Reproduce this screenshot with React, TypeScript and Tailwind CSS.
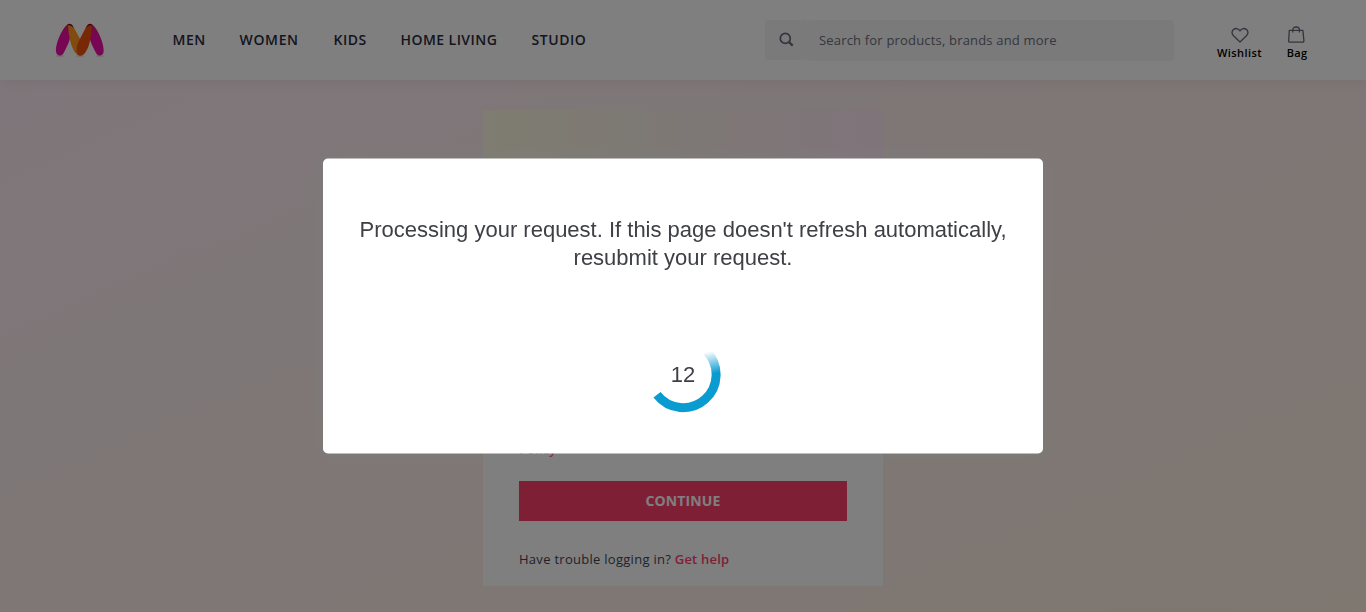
import React from "react";

const navItems = [
  { label: "MEN", cls: "w-[67px] tracking-[0.5px]" },
  { label: "WOMEN", cls: "w-[94px] tracking-[0.66px]" },
  { label: "KIDS", cls: "w-[67px] tracking-[0.5px]" },
  { label: "HOME LIVING", cls: "w-[131px] tracking-[0.44px]" },
  { label: "STUDIO", cls: "w-[56px] tracking-[0.56px]" },
];

function Logo() {
  return (
    <svg width="52" height="36" viewBox="42 36 156 108" className="shrink-0">
      <defs>
        <linearGradient id="legLeft" x1="0" y1="0" x2="0" y2="1">
          <stop offset="0" stopColor="#d81c60" />
          <stop offset="0.3" stopColor="#ee0fa6" />
        </linearGradient>
      </defs>
      <ellipse cx="60" cy="138" rx="12" ry="4" fill="#e6e6e6" />
      <ellipse cx="120" cy="138" rx="12" ry="4" fill="#e6e6e6" />
      <ellipse cx="180" cy="138" rx="12" ry="4" fill="#e6e6e6" />
      <path d="M86 42C69 48 46 100 48 124C49 140 66 140 71 129C79 113 88 97 91 80L92 52Z" fill="url(#legLeft)" />
      <path d="M153 42C170 48 193 100 191 124C190 140 173 140 168 129C160 113 151 97 148 80L147 52Z" fill="url(#legLeft)" />
      <path d="M84 44C92 38 99 48 105 59L120 86L124 136C112 139 103 128 97 112C90 95 85 66 84 44Z" fill="#ff961f" />
      <path d="M155 44C147 38 140 48 134 59L117 92C108 108 106 137 120 137C133 137 140 122 145 110C151 93 155 66 155 44Z" fill="#f0500a" />
      <path d="M80 46C86 39 93 40 98 47L102 54C96 48 87 44 80 46ZM159 46C153 39 146 40 141 47L137 54C143 48 152 44 159 46Z" fill="#8e0f20" />
    </svg>
  );
}

function SearchIcon() {
  return (
    <svg width="16" height="16" viewBox="0 0 16 16" fill="none" stroke="#696b79" strokeWidth="1.700">
      <circle cx="7.300" cy="6.400" r="5" />
      <path d="M10.800 9.900L14.700 13.600" strokeWidth="2.200" />
    </svg>
  );
}

function HeartIcon() {
  return (
    <svg width="18" height="16" viewBox="0 0 18 16" fill="none" stroke="#696b79" strokeWidth="1.300">
      <path d="M9 15L2.300 8.500C.9 6.800.8 4.400 2.200 2.800C3.900 1.300 6.300 1.300 7.900 2.800L9 3.900L10.100 2.800C11.700 1.300 14.100 1.300 15.800 2.800C17.200 4.400 17.100 6.800 15.700 8.500Z" strokeLinejoin="round" />
    </svg>
  );
}

function BagIcon() {
  return (
    <svg width="18" height="18" viewBox="0 0 18 18" fill="none" stroke="#696b79" strokeWidth="1.300">
      <path d="M1.300 4.400H14.900L15.900 14.600Q16 16.100 14.600 16.100H1.600Q.2 16.100 .7 14.600Z" strokeLinejoin="round" />
      <path d="M4.800 6.600V3.900Q4.800 1 8.100 1Q11.400 1 11.400 3.900V6.600" />
    </svg>
  );
}

function Header() {
  return (
    <header className="relative flex h-20 w-full shrink-0 bg-white shadow-[0_4px_12px_0_rgba(0,0,0,0.05)]">
      <div className="flex w-[172.500px] items-center pl-[54px]">
        <Logo />
      </div>
      <nav className="flex w-[592.500px] items-center pb-[2px] text-[14px] font-semibold text-[#282c3f]">
        {navItems.map((item) => (
          <a key={item.label} className={item.cls + " whitespace-nowrap"}>
            {item.label}
          </a>
        ))}
      </nav>
      <div className="flex w-[409px] pt-5">
        <div className="flex h-10 w-[42px] items-center justify-center rounded-l bg-[#f5f5f6]">
          <SearchIcon />
        </div>
        <div className="flex h-[41px] flex-1 items-center rounded bg-[#f5f5f6] pl-3 text-[13px] tracking-[0.18px] text-[#696e79]">
          Search for products, brands and more
        </div>
      </div>
      <div className="flex pt-[26px] pl-[43px] text-[11px] leading-[14px] font-semibold text-black">
        <div className="flex w-[45px] flex-col items-center">
          <div className="flex h-[20px] items-center pb-[2px]"><HeartIcon /></div>
          <span className="tracking-[0.4px] whitespace-nowrap">Wishlist</span>
        </div>
        <div className="ml-[25px] flex w-[20px] flex-col items-center">
          <div className="flex h-[20px] w-[18px] items-start"><BagIcon /></div>
          <span className="tracking-[0.2px]">Bag</span>
        </div>
      </div>
    </header>
  );
}

function LoginCard() {
  return (
    <section className="mt-[30px] flex h-[476px] w-[400px] flex-col bg-white">
      <div className="h-[136px] bg-linear-to-r from-[#fdfae2] via-[#fbf0ea] to-[#ffe8f6]" />
      <div className="flex flex-1 flex-col px-9 text-[13px]">
        <p className="mt-[193px] h-[20px] leading-[20px] font-semibold tracking-[0.1px] text-[#ff3f6c]">Policy</p>
        <button className="mt-[22px] h-10 w-full shrink-0 bg-[#ff3f6c] pb-[2px] text-[14px] font-bold tracking-[0.1px] text-white">CONTINUE</button>
        <p className="mt-[28px] leading-[20px] tracking-[0.28px] text-[#424553]">
          Have trouble logging in? <span className="font-semibold tracking-[0.2px] text-[#ff3f6c]">Get help</span>
        </p>
      </div>
    </section>
  );
}

function Spinner() {
  return (
    <div className="relative flex h-[76px] w-[76px] items-center justify-center">
      <svg width="76" height="76" viewBox="0 0 76 76" className="absolute inset-0" fill="none">
        <defs>
          <linearGradient id="tail" gradientUnits="userSpaceOnUse" x1="64" y1="15" x2="69" y2="37">
            <stop offset="0" stopColor="#0a9bd0" stopOpacity="0" />
            <stop offset="1" stopColor="#0a9bd0" />
          </linearGradient>
        </defs>
        <path d="M61.330 14.670A33 33 0 1 1 12 58.300" stroke="url(#tail)" strokeWidth="9" />
      </svg>
      <span>12</span>
    </div>
  );
}

export default function App() {
  return (
    <div className="h-[612px] w-full overflow-hidden font-['Open_Sans',sans-serif]">
      <div className="flex h-full flex-col items-center bg-linear-to-br/srgb from-[#feedf6] to-[#fcf0e2]">
        <Header />
        <LoginCard />
      </div>
      <div className="fixed inset-0 bg-black/50">
        <div className="absolute top-1/2 left-1/2 flex h-[295px] w-[720px] -translate-x-1/2 -translate-y-1/2 flex-col items-center rounded-[5px] bg-white pt-[57px] text-center font-['Liberation_Sans',sans-serif] text-[22px] leading-[28px] text-[#3f4045] shadow-[0_0_20px_rgba(128,128,128,0.5)]">
          <p className="w-[660px]">
            Processing your request. If this page doesn't refresh automatically, resubmit your request.
          </p>
          <div className="mt-[65px]">
            <Spinner />
          </div>
        </div>
      </div>
    </div>
  );
}
